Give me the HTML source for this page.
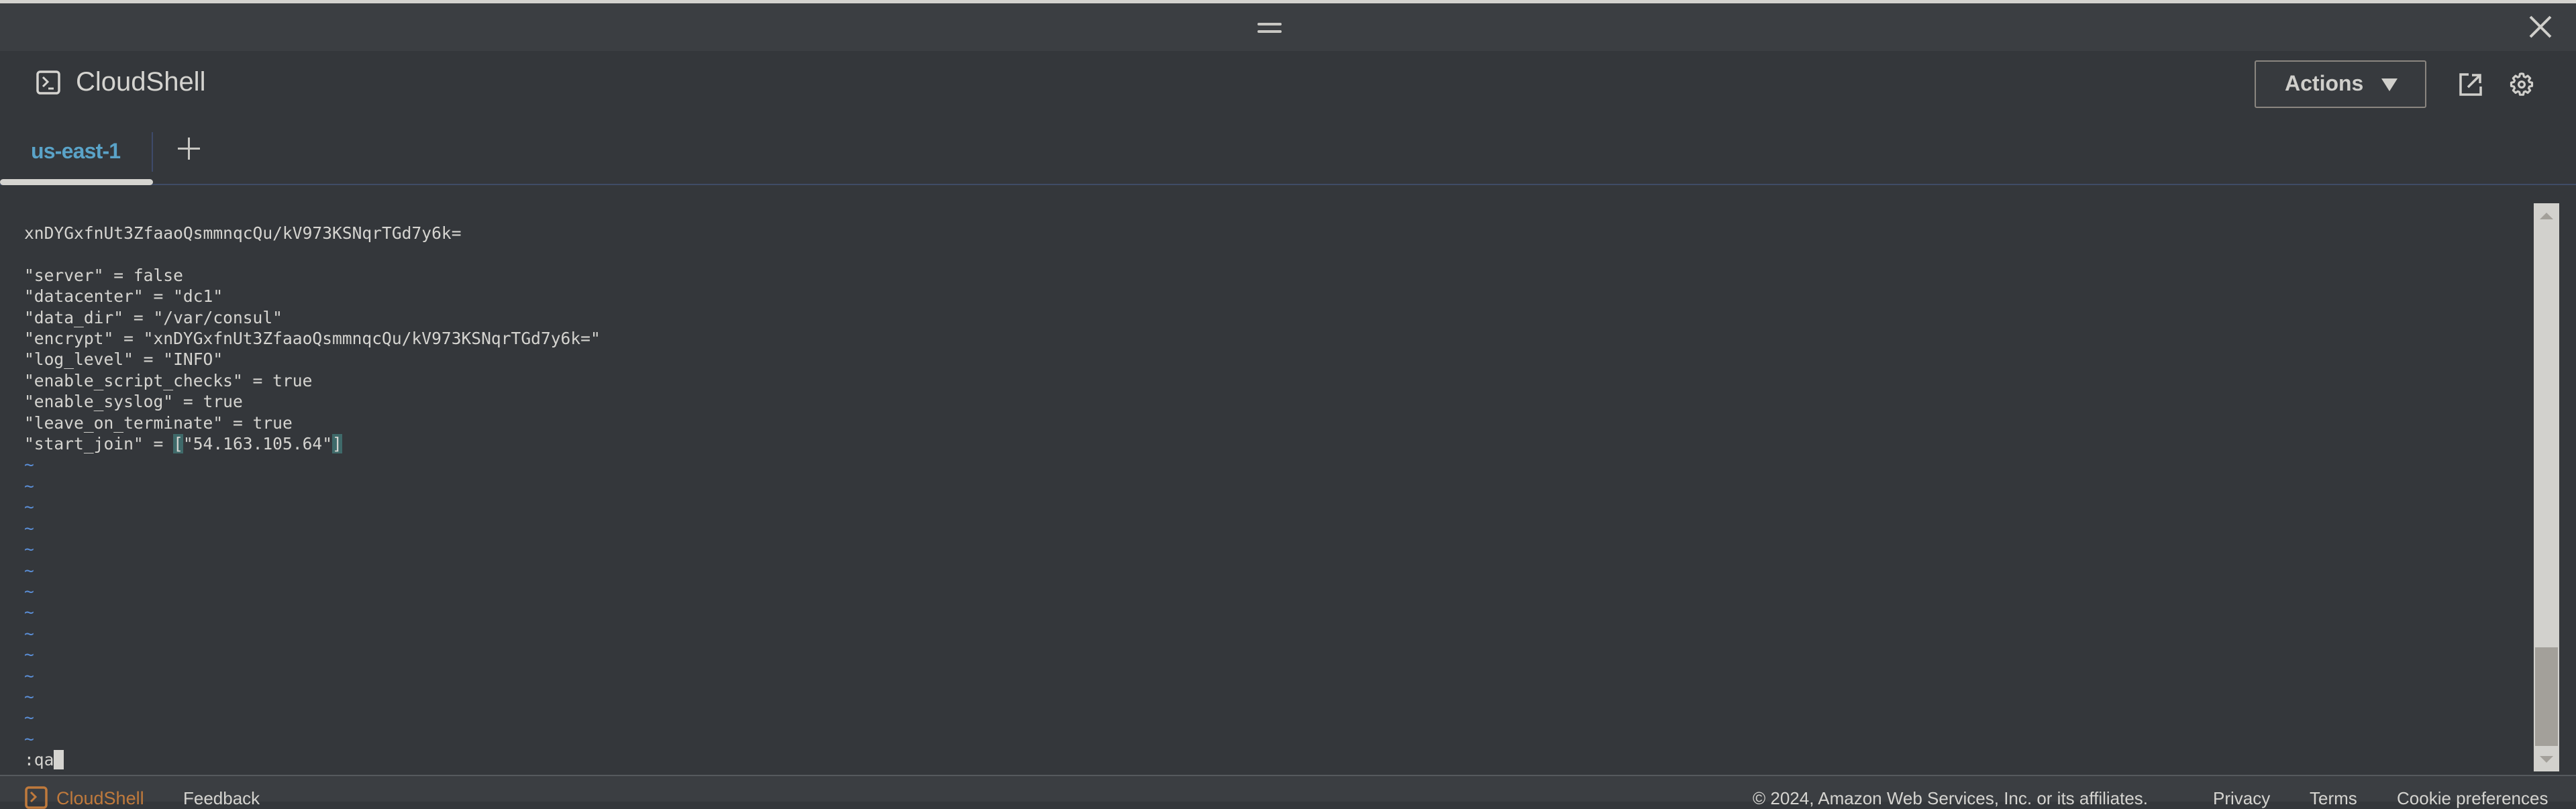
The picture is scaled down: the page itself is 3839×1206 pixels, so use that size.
<!DOCTYPE html>
<html><head><meta charset="utf-8"><style>
*{margin:0;padding:0;box-sizing:border-box}
body{width:3839px;height:1195px;background:#34373b;position:relative;overflow:hidden;font-family:"Liberation Sans",Arial,sans-serif;color:#d5d4d0}
.a{position:absolute}
#term{position:absolute;left:36px;top:332px;font-family:"DejaVu Sans Mono","Liberation Mono",monospace;font-size:24.6px;line-height:31.4px;white-space:pre;color:#d5d4d0}
.t{color:#5b8fd8}
.hl{background:#3f6a6a}
</style></head><body>
<div class="a" style="left:0;top:0;width:3839px;height:5px;background:#d4d3cf"></div>
<div class="a" style="left:0;top:5px;width:3839px;height:71px;background:#3b3e42"></div>
<div class="a" style="left:1874px;top:34px;width:36px;height:4px;background:#c8c7c3;border-radius:2px"></div>
<div class="a" style="left:1874px;top:45px;width:36px;height:4px;background:#c8c7c3;border-radius:2px"></div>
<svg class="a" style="left:3768px;top:22px" width="36" height="36" viewBox="0 0 36 36"><path d="M3 3L33 33M33 3L3 33" stroke="#d0cfcb" stroke-width="4"/></svg>

<svg class="a" style="left:54px;top:105px" width="36" height="36" viewBox="0 0 36 36"><rect x="2" y="2" width="32" height="32" rx="4" fill="none" stroke="#d5d4d0" stroke-width="3.5"/><path d="M10 10L17 17L10 24" fill="none" stroke="#d5d4d0" stroke-width="3"/><path d="M18 27h8" stroke="#d5d4d0" stroke-width="3"/></svg>
<div class="a" style="left:113px;top:98px;font-size:40px;line-height:48px;color:#d5d4d0">CloudShell</div>

<div class="a" style="left:3360px;top:90px;width:256px;height:71px;border:2px solid #8b8680;border-radius:3px;background:#373a3e"></div>
<div class="a" style="left:3405px;top:104px;font-size:32px;font-weight:bold;line-height:40px;color:#d0cfcb">Actions</div>
<svg class="a" style="left:3549px;top:117px" width="24" height="19" viewBox="0 0 24 19"><path d="M0 0H24L12 19Z" fill="#d0cfcb"/></svg>
<svg class="a" style="left:3665px;top:109px" width="34" height="34" viewBox="0 0 34 34"><path d="M14 2H2V32H32V20" fill="none" stroke="#d0cfcb" stroke-width="3.5"/><path d="M13 21L30 4M19 3H31V15" fill="none" stroke="#d0cfcb" stroke-width="3.5"/></svg>
<svg class="a" style="left:3739px;top:107px" width="38" height="38" viewBox="0 0 24 24"><path d="M12 1.8l1.6.2.5 2.5 1.5.7 2.1-1.4 2.3 2.3-1.4 2.1.7 1.5 2.5.5v3.2l-2.5.5-.7 1.5 1.4 2.1-2.3 2.3-2.1-1.4-1.5.7-.5 2.5h-3.2l-.5-2.5-1.5-.7-2.1 1.4-2.3-2.3 1.4-2.1-.7-1.5-2.5-.5v-3.2l2.5-.5.7-1.5-1.4-2.1 2.3-2.3 2.1 1.4 1.5-.7.5-2.5z" fill="none" stroke="#d0cfcb" stroke-width="2" stroke-linejoin="round"/><circle cx="12" cy="12" r="2.8" fill="none" stroke="#d0cfcb" stroke-width="2"/></svg>

<div class="a" style="left:46px;top:205px;font-size:32px;font-weight:bold;line-height:40px;color:#5aa3c8;letter-spacing:-0.8px">us-east-1</div>
<div class="a" style="left:226px;top:197px;width:2px;height:59px;background:#3e4a6a"></div>
<svg class="a" style="left:265px;top:205px" width="33" height="33" viewBox="0 0 33 33"><path d="M16.5 0V33M0 16.5H33" stroke="#c8c7c3" stroke-width="3"/></svg>
<div class="a" style="left:0;top:274px;width:3839px;height:2px;background:#3f4c66"></div>
<div class="a" style="left:0;top:267px;width:228px;height:9px;background:#d5d4d0;border-radius:5px"></div>

<div id="term">xnDYGxfnUt3ZfaaoQsmmnqcQu/kV973KSNqrTGd7y6k=

"server" = false
"datacenter" = "dc1"
"data_dir" = "/var/consul"
"encrypt" = "xnDYGxfnUt3ZfaaoQsmmnqcQu/kV973KSNqrTGd7y6k="
"log_level" = "INFO"
"enable_script_checks" = true
"enable_syslog" = true
"leave_on_terminate" = true
"start_join" = <span class="hl">[</span>"54.163.105.64"<span class="hl">]</span>
<span class="t">~
~
~
~
~
~
~
~
~
~
~
~
~
~</span>
:qa<span style="background:#d5d4d0"> </span></div>

<div class="a" style="left:3776px;top:303px;width:38px;height:847px;background:#d2d1cd"></div>
<div class="a" style="left:3778px;top:965px;width:34px;height:147px;background:#a3a09a"></div>
<svg class="a" style="left:3785px;top:317px" width="20" height="10"><path d="M0 10L10 0L20 10Z" fill="#a3a09a"/></svg>
<svg class="a" style="left:3785px;top:1127px" width="20" height="10"><path d="M0 0L20 0L10 10Z" fill="#a3a09a"/></svg>

<div class="a" style="left:0;top:1155px;width:3839px;height:40px;background:#3b3e42;border-top:2px solid #55595d"></div>
<svg class="a" style="left:37px;top:1172px" width="34" height="34" viewBox="0 0 34 34"><rect x="2" y="2" width="30" height="30" rx="4" fill="none" stroke="#c07a3c" stroke-width="3.5"/><path d="M9 9L16 16L9 23" fill="none" stroke="#c07a3c" stroke-width="3"/></svg>
<div class="a" style="left:84px;top:1174px;font-size:27px;line-height:32px;color:#c07a3c">CloudShell</div>
<div class="a" style="left:273px;top:1174px;font-size:26px;line-height:32px">Feedback</div>
<div class="a" style="left:2612px;top:1174px;font-size:26px;line-height:32px;white-space:nowrap">© 2024, Amazon Web Services, Inc. or its affiliates.</div>
<div class="a" style="left:3298px;top:1174px;font-size:26px;line-height:32px">Privacy</div>
<div class="a" style="left:3442px;top:1174px;font-size:26px;line-height:32px">Terms</div>
<div class="a" style="left:3572px;top:1174px;font-size:26px;line-height:32px;white-space:nowrap">Cookie preferences</div>
</body></html>
